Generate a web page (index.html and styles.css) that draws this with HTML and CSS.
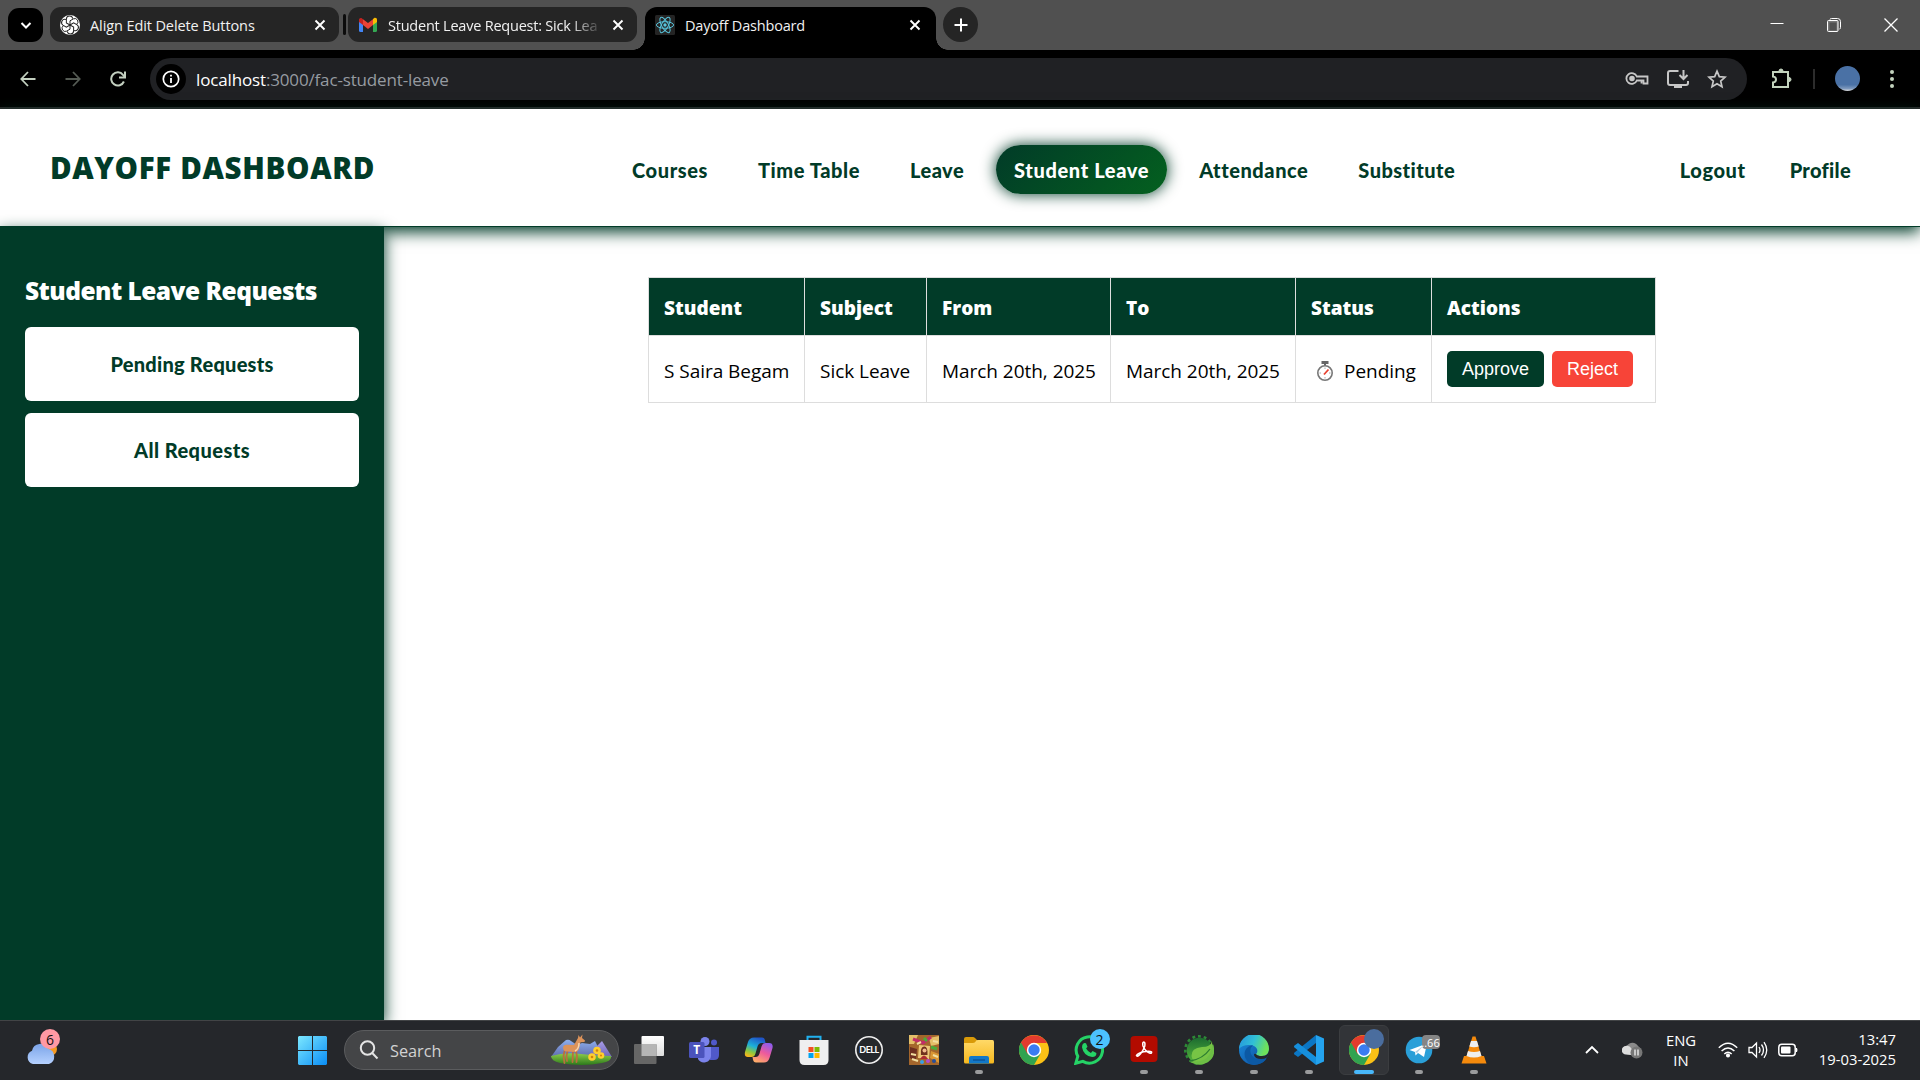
FILE: index.html
```html
<!DOCTYPE html>
<html lang="en">
<head>
<meta charset="utf-8">
<title>Dayoff Dashboard</title>
<link rel="stylesheet" href="styles.css">
</head>
<body>
<div class="tabstrip">
  <div class="tab-search"><svg width="14" height="14" viewBox="0 0 14 14" fill="none" stroke="#fff" stroke-width="2"><path d="M2.500 5l4.500 4.500L11.500 5"/></svg></div>
  <div class="tab tab-one">
    <svg class="fav" width="20" height="20" viewBox="0 0 20 20"><circle cx="10" cy="10" r="10" fill="#fff"/><g fill="none" stroke="#222" stroke-width="1"><path id="petal" d="M10 10V5.800l3.500-2a3.200 3.200 0 0 1 3.300 5.400"/><use href="#petal" transform="rotate(60 10 10)"/><use href="#petal" transform="rotate(120 10 10)"/><use href="#petal" transform="rotate(180 10 10)"/><use href="#petal" transform="rotate(240 10 10)"/><use href="#petal" transform="rotate(300 10 10)"/></g></svg>
    <span class="tab-title">Align Edit Delete Buttons</span>
    <svg class="x" width="12" height="12" viewBox="0 0 12 12" stroke="#fff" stroke-width="1.900"><path d="M1.500 1.500l9 9M10.500 1.500l-9 9"/></svg>
  </div>
  <div class="tab-divider"></div>
  <div class="tab tab-two">
    <svg class="fav" width="20" height="20" viewBox="0 0 20 20"><path d="M1 4.500v11A1.500 1.500 0 0 0 2.500 17H5V7z" fill="#4285f4"/><path d="M19 4.500v11a1.500 1.500 0 0 1-1.500 1.500H15V7z" fill="#34a853"/><path d="M15 4l1-.8c1.300-.9 3 0 3 1.500V7l-4 3z" fill="#fbbc04"/><path d="M5 4.200L4 3.400C2.700 2.500 1 3.300 1 4.900V7l4 3z" fill="#c5221f"/><path d="M5 4.200l5 3.900 5-3.900V10l-5 4-5-4z" fill="#ea4335"/></svg>
    <span class="tab-title fade">Student Leave Request: Sick Lea</span>
    <svg class="x" width="12" height="12" viewBox="0 0 12 12" stroke="#fff" stroke-width="1.900"><path d="M1.500 1.500l9 9M10.500 1.500l-9 9"/></svg>
  </div>
  <div class="tab tab-active">
    <svg class="fav" width="20" height="20" viewBox="0 0 20 20"><rect width="20" height="20" rx="1.500" fill="#242424"/><g fill="none" stroke="#58c4dc" stroke-width="1"><ellipse cx="10" cy="10" rx="8.600" ry="3.300"/><ellipse cx="10" cy="10" rx="8.600" ry="3.300" transform="rotate(60 10 10)"/><ellipse cx="10" cy="10" rx="8.600" ry="3.300" transform="rotate(120 10 10)"/></g><circle cx="10" cy="10" r="1.700" fill="#58c4dc"/></svg>
    <span class="tab-title">Dayoff Dashboard</span>
    <svg class="x" width="12" height="12" viewBox="0 0 12 12" stroke="#fff" stroke-width="1.900"><path d="M1.500 1.500l9 9M10.500 1.500l-9 9"/></svg>
  </div>
  <div class="new-tab"><svg width="14" height="14" viewBox="0 0 14 14" stroke="#fff" stroke-width="2"><path d="M7 .5v13M.5 7h13"/></svg></div>
  <div class="win-controls">
    <svg width="14" height="14" viewBox="0 0 14 14"><path d="M.5 5.500h13" stroke="#fff"/></svg>
    <svg width="14" height="14" viewBox="0 0 14 14" fill="none" stroke="#fff"><path d="M3 1.500q0-1 1.500-1h6q3 0 3 3v6q0 1.500-1 1.500"/><rect x=".5" y="2.500" width="10.500" height="11" rx="1" fill="#777"/><rect x="2.500" y="4.500" width="7" height="8" fill="#505050" stroke="none"/></svg>
    <svg width="14" height="14" viewBox="0 0 14 14" stroke="#fff" stroke-width="1.300"><path d="M.5.500l13 13M13.500.5l-13 13"/></svg>
  </div>
</div>

<div class="toolbar">
  <svg class="nav-ic" width="16" height="16" viewBox="0 0 16 16" fill="none" stroke="#c3d0c0" stroke-width="1.800"><path d="M15.500 8H1.500M8 1L1.300 8 8 15"/></svg>
  <svg class="nav-ic" width="16" height="16" viewBox="0 0 16 16" fill="none" stroke="#555b54" stroke-width="1.800"><path d="M.5 8h14M8 1l6.700 7L8 15"/></svg>
  <svg class="nav-ic" width="16" height="16" viewBox="0 0 16 16" fill="none" stroke="#c3d0c0" stroke-width="2"><path d="M13.900 10.500A6.600 6.600 0 1 1 13 3.800L14.500 5.500"/><path d="M15 .5v6H9"/></svg>
  <div class="omnibox">
    <div class="info"><svg width="18" height="18" viewBox="0 0 18 18"><circle cx="9" cy="9" r="7.700" fill="none" stroke="#fff" stroke-width="1.700"/><path d="M9 8v5M9 4.800v1.800" stroke="#fff" stroke-width="1.800"/></svg></div>
    <span class="url"><b>localhost</b>:3000/fac-student-leave</span>
    <div class="omni-icons">
      <svg width="24" height="16" viewBox="0 0 24 16" fill="none" stroke="#c7c7c7" stroke-width="2"><path d="M11.800 5.500H22.500v7h-4v-3h-2v3-3h-4.700A5.400 5.400 0 1 1 11.800 5.500z" stroke-width="1.800"/><circle cx="7" cy="7.500" r="1.800" fill="#c7c7c7"/></svg>
      <svg width="22" height="20" viewBox="0 0 22 20" fill="none" stroke="#c7c7c7" stroke-width="2"><path d="M11.500 2H3Q1 2 1 4v10q0 2 2 2h16q2 0 2-2v-2"/><path d="M16.500 1v8.500M12.500 6l4 4 4-4"/><path d="M7 17.500h8" stroke-width="3"/></svg>
      <svg width="20" height="20" viewBox="0 0 20 20" fill="none" stroke="#c7c7c7" stroke-width="1.700"><path d="M10 2.200l2.300 5.400 5.800.5-4.400 3.900 1.300 5.700-5-3-5 3 1.300-5.700L1.900 8.100l5.800-.5z"/></svg>
    </div>
  </div>
  <div class="tool-right">
    <svg width="22" height="22" viewBox="0 0 22 22" fill="none" stroke="#c3d3bd" stroke-width="2"><path d="M2 4h15v15H2v-4.500q3-.3 3-3t-3-3z"/><path d="M8 3q0-2 2-2t2 2zM18 9.500q2 0 2 2t-2 2z" fill="#c3d3bd" stroke-width="1"/></svg>
    <i class="sep"></i>
    <i class="avatar"></i>
    <svg width="6" height="20" viewBox="0 0 6 20" fill="#c3d3bd"><circle cx="3" cy="3" r="2"/><circle cx="3" cy="10" r="2"/><circle cx="3" cy="17" r="2"/></svg>
  </div>
</div>

<div class="page">
  <header class="site-header">
    <h1>DAYOFF DASHBOARD</h1>
    <nav class="main-nav">
      <a class="courses">Courses</a><a class="timetable">Time Table</a><a class="leave">Leave</a><a class="current">Student Leave</a><a class="attendance">Attendance</a><a class="substitute">Substitute</a>
    </nav>
    <nav class="user-nav"><a class="logout">Logout</a><a class="profile-link">Profile</a></nav>
  </header>
  <div class="content">
    <aside class="sidebar">
      <h2>Student Leave Requests</h2>
      <a class="side-btn pending">Pending Requests</a>
      <a class="side-btn all">All Requests</a>
    </aside>
    <main class="main">
      <table class="requests">
        <colgroup><col class="c1"><col class="c2"><col class="c3"><col class="c4"><col class="c5"><col class="c6"></colgroup>
        <thead><tr><th>Student</th><th>Subject</th><th>From</th><th>To</th><th>Status</th><th>Actions</th></tr></thead>
        <tbody><tr>
          <td>S Saira Begam</td><td>Sick Leave</td><td>March 20th, 2025</td><td>March 20th, 2025</td>
          <td><div class="status"><svg width="18" height="22" viewBox="0 0 18 22"><path d="M5.500 1h7v3h-7zM8 3h2v3H8z" fill="#666"/><circle cx="9" cy="13" r="7.200" fill="#fff" stroke="#777" stroke-width="1.600"/><path d="M9 7.500v1.500M9 17v1.500M3.500 13H5M13 13h1.500" stroke="#aaa"/><path d="M8 14.500L12.500 9.500" stroke="#e8412f" stroke-width="1.800"/></svg><span>Pending</span></div></td>
          <td class="action-cell"><div class="actions"><button class="approve">Approve</button><button class="reject">Reject</button></div></td>
        </tr></tbody>
      </table>
    </main>
  </div>
</div>

<footer class="taskbar">
  <div class="weather">
    <svg width="36" height="40" viewBox="0 0 36 40"><circle cx="26" cy="19" r="7" fill="#f59a23"/><defs><linearGradient id="cl" x2="0" y2="1"><stop stop-color="#7ba4e8"/><stop offset="1" stop-color="#b5d1ff"/></linearGradient></defs><path d="M9 34a7 7 0 0 1-1-13.300 8.500 8.500 0 0 1 16-2 8 8 0 0 1 1 15.300z" fill="url(#cl)"/></svg>
    <span class="badge pink">6</span>
  </div>
  <svg class="start" width="29" height="29" viewBox="0 0 29 29"><defs><linearGradient id="wl" x2="1" y2="1"><stop stop-color="#7ce8ff"/><stop offset="1" stop-color="#0a8df5"/></linearGradient></defs><path d="M1 0h13v14H0V1zM15 0h13l1 1v13H15zM0 15h14v14H1l-1-1zM15 15h14v13l-1 1H15z" fill="url(#wl)"/></svg>
  <div class="search">
    <svg width="20" height="20" viewBox="0 0 20 20" fill="none" stroke="#e4e4e4" stroke-width="2"><circle cx="8.500" cy="8" r="6.700"/><path d="M13.200 13l5.300 5.500"/></svg>
    <span>Search</span>
    <svg class="scene" width="62" height="32" viewBox="0 0 62 32"><defs><linearGradient id="gr" x2="0" y2="1"><stop stop-color="#8ccc4c"/><stop offset="1" stop-color="#2c7a1a"/></linearGradient><linearGradient id="mt" x2="0" y2="1"><stop stop-color="#8fb0ee"/><stop offset="1" stop-color="#5f6cae"/></linearGradient><linearGradient id="mp" x2="0" y2="1"><stop stop-color="#a89be8"/><stop offset="1" stop-color="#6d66b5"/></linearGradient></defs><path d="M1 23L8 13l8-7q3-1 5 1l6 4 5-2 8 1 5-3 8 16z" fill="url(#mt)"/><path d="M38 22l8-9 6-6 10 16z" fill="url(#mp)"/><path d="M1 22q14-4 30-2t30 2q1 5-9 7-20 4-42 0Q1 27 1 22z" fill="url(#gr)"/><g fill="none" stroke="#b9703e" stroke-width="1.800" stroke-linecap="round"><path d="M14.500 17l-1 5 1 7M17.500 17l-1 5 .500 5M23 17l-.5 11M26 17l1 5-.5 6"/></g><path d="M13 13q1-2.500 4-2.200l7 .2 4-7 .5-3 1.500 2.500L32.500.5 32 4l3 2.500-.5 1.500-4 .3-1.500 6.500q-1 3.200-4 3.200l-8-.5q-4 0-4-4.500z" fill="#dd935a"/><path d="M29 9q0 6-4 8" stroke="#f6d5ae" stroke-width="1.500" fill="none"/><g fill="#ffcf2e"><circle cx="47" cy="16.500" r="3.800"/><circle cx="42" cy="23" r="3.800"/><circle cx="51" cy="21.500" r="3.300"/></g><g fill="#d4820c"><circle cx="47" cy="16.500" r="1.300"/><circle cx="42" cy="23" r="1.300"/><circle cx="51" cy="21.500" r="1"/></g></svg>
  </div>
  <div class="apps">
    <div class="app"><svg width="30" height="30" viewBox="0 0 30 30"><defs><linearGradient id="tv" x2="0" y2="1"><stop stop-color="#fff"/><stop offset="1" stop-color="#ddd"/></linearGradient></defs><rect x="7.500" y="1" width="22.500" height="20" rx="1" fill="url(#tv)"/><rect x="0" y="9" width="22.500" height="20" rx="1" fill="#666"/><path d="M7.500 9h15v12h-15z" fill="#b5b5b5"/></svg></div>
    <div class="app"><svg width="30" height="30" viewBox="0 0 30 30"><circle cx="25" cy="7.500" r="3" fill="#5059c9"/><path d="M21 12h9v8q0 5-5 5h-4z" fill="#5059c9"/><circle cx="16" cy="6.500" r="4.500" fill="#7b83eb"/><path d="M9 12h13v9a7 7 0 0 1-13 3z" fill="#7b83eb"/><rect x="0" y="7" width="15.500" height="16" rx="1.500" fill="#4b53bc"/><text x="7.700" y="19.200" text-anchor="middle" class="teams-t">T</text></svg></div>
    <div class="app"><svg width="30" height="30" viewBox="0 0 30 30"><defs><linearGradient id="ca" x1=".6" y1="0" x2=".2" y2="1"><stop stop-color="#2055c8"/><stop offset=".45" stop-color="#1cb0d8"/><stop offset=".75" stop-color="#8fc83c"/><stop offset="1" stop-color="#ffb31a"/></linearGradient><linearGradient id="cb" x1=".8" y1="0" x2=".3" y2="1"><stop stop-color="#8c5cf0"/><stop offset=".5" stop-color="#ee5a9c"/><stop offset="1" stop-color="#ffab6a"/></linearGradient></defs><path d="M10 2.500h8q2.500 0 3 3l.5 2.500h-4q-3 0-4 3.500l-2 7q-1 3.500-4 3.500H4q-4 0-3-5l3-10q1.500-4.500 6-4.500z" fill="url(#ca)"/><path d="M20 27.500h-8q-2.500 0-3-3L8.500 22h3q3 0 4-3.500l2-7q1-3.500 4-3.500H25q4.500 0 3.500 5l-3 10q-1.500 4.500-5.500 4.500z" fill="url(#cb)"/></svg></div>
    <div class="app"><svg width="30" height="30" viewBox="0 0 30 30"><path d="M8.500 6V1.700h13V6" fill="none" stroke="#21b1ef" stroke-width="2"/><path d="M.5 5h29v20q0 5-5 5h-19q-5 0-5-5z" fill="#efefef"/><path d="M9.500 12h5v5h-5z" fill="#f25022"/><path d="M15.500 12h5v5h-5z" fill="#7fba00"/><path d="M9.500 18h5v5h-5z" fill="#00a4ef"/><path d="M15.500 18h5v5h-5z" fill="#ffb900"/></svg></div>
    <div class="app"><svg width="30" height="30" viewBox="0 0 30 30"><circle cx="15" cy="15" r="13.200" fill="none" stroke="#eee" stroke-width="1.600"/><text x="15" y="18.300" text-anchor="middle" class="dell-t">DELL</text></svg></div>
    <div class="app"><svg width="30" height="30" viewBox="0 0 30 30"><rect width="30" height="30" fill="#a4662c"/><path d="M0 0h9l-4 9H0zM20 3l10-2v8l-8 2z" fill="#e4bf69"/><path d="M4 4l10 4 8-6" stroke="#c22d68" stroke-width="3" fill="none"/><path d="M15 3l3 3M22 12l6 2" stroke="#4cab3a" stroke-width="3"/><path d="M1 12l7 2-1 12-6-3z" fill="#6e2e20"/><path d="M10 10l11 1-1 13-11-1z" fill="#edc678"/><path d="M12 20q-1-8 3-8.500t3.500 8.500z" fill="#71301d"/><circle cx="15.500" cy="15.500" r="2" fill="#f1b98d"/><path d="M11 24q4-7 8 0z" fill="#ae2931"/><path d="M22 16l8 3v9l-9-5z" fill="#d99634"/><path d="M2 19l5 1M3 24l6 2M24 20l5 2M8 9l4-2M24 6l5 1" stroke="#f2dea0" stroke-width="2"/><circle cx="13" cy="27" r="2" fill="#37a0e5"/><circle cx="19" cy="26" r="2" fill="#b34ad1"/><circle cx="25" cy="26" r="2" fill="#294f9a"/></svg></div>
    <div class="app"><svg width="30" height="30" viewBox="0 0 30 30"><defs><linearGradient id="fo" x2="0" y2="1"><stop stop-color="#ffd968"/><stop offset="1" stop-color="#f6b81e"/></linearGradient></defs><path d="M0 4q0-2 2-2h7q1 0 2 1l2 2v4H0z" fill="#d99a08"/><path d="M0 8h9q2 0 3-2 0-1 2-1h14.500Q30 5 30 7v20q0 1.500-1.500 1.500h-27Q0 28.500 0 27z" fill="url(#fo)"/><path d="M5 28.500V23q0-2 2-2h16q2 0 2 2v5.500z" fill="#1278c8"/><path d="M9 25h12" stroke="#0b4f92" stroke-width="1.300"/></svg><i class="run"></i></div>
    <div class="app"><svg width="30" height="30" viewBox="0 0 30 30"><g id="chrome"><circle cx="15" cy="15" r="15" fill="#fbc116"/><path d="M15 15L2 7.500A15 15 0 0 0 15 30l6.500-11.300z" fill="#31a350"/><path d="M15 15v-7h13A15 15 0 0 0 2 7.500l6.500 11.300z" fill="#e33b2e"/><circle cx="15" cy="15" r="7.200" fill="#fff"/><circle cx="15" cy="15" r="5.700" fill="#3a7cf0"/></g></svg></div>
    <div class="app"><svg width="30" height="30" viewBox="0 0 30 30"><path d="M1.800 28.300l2-7A13.200 13.200 0 1 1 8.800 26.400z" fill="none" stroke="#25d366" stroke-width="3"/><path d="M10 8l2 .2 1.500 3.600-1.400 1.800q1.800 3.200 4.800 4.500l1.700-2 3.800 1.800q.2 4-4.200 4.100Q9.500 20.800 8 12.200 7.800 9.500 10 8z" fill="#25d366"/></svg><span class="badge blue">2</span></div>
    <div class="app"><svg width="30" height="30" viewBox="0 0 30 30"><rect x="1.500" y="1" width="27" height="26" rx="4" fill="#b30b00"/><path d="M7.500 20.500q1.500-2.500 7-3.700 6-1.300 8 0 .8 2-2 1.200-4.500-2-6.500-7-.8-4 .8-4t1 4q-1.300 4-4 7.500-3.500 4-4.300 2z" fill="none" stroke="#fff" stroke-width="1.500"/></svg><i class="run"></i></div>
    <div class="app"><svg width="30" height="30" viewBox="0 0 30 30"><defs><linearGradient id="sp" x2="0" y2="1"><stop stop-color="#1c6b30"/><stop offset="1" stop-color="#57b83c"/></linearGradient></defs><circle cx="15" cy="15" r="13.700" fill="none" stroke="#2d8a36" stroke-width="2.600" stroke-dasharray="2.870 2.870"/><circle cx="15.500" cy="15.500" r="12.800" fill="url(#sp)"/><path d="M29 9q4 12-5 18T5 26q10 3 24-17z" fill="#6dbe45"/><path d="M28 6Q27 12 18 12 7 13 7.500 21q.5 4 3 5.500Q21 27 25 20t3-14z" fill="#77c445"/><path d="M6 26q13-2 20-12" stroke="#2b7d30" stroke-width="1.300" fill="none"/></svg><i class="run"></i></div>
    <div class="app"><svg width="30" height="30" viewBox="0 0 30 30"><defs><linearGradient id="ea" x2="1" y2=".3"><stop stop-color="#2493df"/><stop offset=".55" stop-color="#31c0d5"/><stop offset="1" stop-color="#6ee25b"/></linearGradient><linearGradient id="eb" x2="1" y2="1"><stop stop-color="#1b8fe0"/><stop offset="1" stop-color="#0c4797"/></linearGradient></defs><circle cx="15" cy="15" r="15" fill="url(#eb)"/><path d="M0 14A15 15 0 0 1 30 14q0 7-7 7-5 0-6-2 2-2 1-5-2-4-8-4Q3 10 0 14z" fill="url(#ea)"/><path d="M11 29Q4 23 6 16q2-5 8-6-4 4-2 9 3 7 12 5 2-.5 3 .5-6 7-16 4.500z" fill="#0c59a4"/><path d="M17 19q-2-1-2 1 1 4 7 4 3 0 6-1.500 3-4 2-7-1 5.500-7 5.500-5 0-6-2z" fill="#25272b"/></svg><i class="run"></i></div>
    <div class="app"><svg width="30" height="30" viewBox="0 0 30 30"><path d="M22 0l8 3.500v23L22 30z" fill="#24a3ee"/><path d="M22 0v8L4 22l-3.500-2.500q-1-1 0-2z" fill="#0b76c4"/><path d="M22 30v-8L4 8 .5 10.500q-1 1 0 2z" fill="#168fdc"/></svg><i class="run"></i></div>
    <div class="app active"><svg width="30" height="30" viewBox="0 0 30 30"><use href="#chrome"/></svg><span class="badge profile"></span><i class="run on"></i></div>
    <div class="app"><svg width="30" height="30" viewBox="0 0 30 30"><circle cx="15" cy="15" r="13.300" fill="#2a9fd8"/><path d="M5.500 15L23 8.500 20 22l-6-4-2.500 2.500L11 17z" fill="#fff"/><path d="M11 17l8-6-6 7z" fill="#b4cfe0"/></svg><span class="badge gray">..66</span><i class="run"></i></div>
    <div class="app"><svg width="30" height="30" viewBox="0 0 30 30"><path d="M5 21h20l2.500 7.500h-25z" fill="#f58a0c"/><path d="M13.500 1.500h3L23 23q-8 4.500-16 0z" fill="#f58a0c"/><path d="M12 6h6l1.700 5.500q-4.700 1.500-9.400 0zM9 16q6 2 12 0l1.500 5q-7.500 3-15 0z" fill="#eee"/></svg><i class="run"></i></div>
  </div>
  <div class="tray">
    <svg class="chev" width="14" height="10" viewBox="0 0 14 10" fill="none" stroke="#fff" stroke-width="1.800"><path d="M1 8l6-6 6 6"/></svg>
    <svg class="cloud" width="21" height="20" viewBox="0 0 21 20"><path d="M4 14a4.500 4.500 0 0 1 1-8.500A6.500 6.500 0 0 1 16 6q3 2 3 7l-8 2z" fill="#8b8b8b"/><path d="M4 14.500a4 4 0 0 1 0-8.500q3-1 6 3l3 2-4 4z" fill="#ddd"/><circle cx="14.500" cy="12.500" r="6" fill="#777"/><path d="M13 9.500v6M16 9.500v6" stroke="#fff" stroke-width="1.200"/></svg>
    <div class="lang"><span>ENG</span><span>IN</span></div>
    <svg class="wifi" width="20" height="16" viewBox="0 0 20 16" fill="none" stroke="#fff" stroke-width="1.500"><path d="M.8 5.800q9.200-9 18.400 0M3.600 9q6.400-6 12.800 0M6.300 12q3.700-3.300 7.400 0"/><circle cx="10" cy="13.500" r="1.300" fill="#fff"/></svg>
    <svg class="vol" width="20" height="18" viewBox="0 0 20 18" fill="none" stroke="#fff" stroke-width="1.300"><path d="M1 6.500h3L8.500 2v14L4 11.500H1zM11 6q2 3 0 6M13.500 3.500q4 5.500 0 11M16 1.200q5.500 8 0 15.600"/></svg>
    <svg class="bat" width="20" height="14" viewBox="0 0 20 14"><rect x=".8" y="1.300" width="16.400" height="11.400" rx="3" fill="none" stroke="#fff" stroke-width="1.500"/><rect x="3" y="3.500" width="9.500" height="7" rx="1" fill="#fff"/><path d="M18 5h1q1 2 0 4h-1z" fill="#fff"/></svg>
    <div class="clock"><span>13:47</span><span>19-03-2025</span></div>
  </div>
</footer>
</body>
</html>
```
FILE: styles.css
```css
* { box-sizing: border-box; }
body { margin: 0; width: 1920px; height: 1080px; overflow: hidden; display: flex; flex-direction: column; background: #fff; font-family: "Open Sans", "Noto Sans", sans-serif; color: #000; }
svg { display: block; flex: none; }

/* Browser tab strip */
.tabstrip { height: 50px; flex: none; display: flex; align-items: flex-start; padding: 7px 22px 0 8px; background: #505050; }
.tab-search { width: 35px; height: 34px; margin: 1px 7px 0 0; border-radius: 11px; background: #000; display: flex; align-items: center; justify-content: center; }
.tab { height: 35px; display: flex; align-items: center; background: #252525; border-radius: 11px; padding: 1px 13px 0 10px; color: #f1f1f1; font-size: 14.500px; letter-spacing: -.1px; }
.tab-one { width: 289px; }
.tab-two { width: 289px; margin-right: 8px; letter-spacing: -.22px; }
.tab-divider { width: 3px; height: 21px; margin: 7px 2px 0 4px; border-radius: 2px; background: #0c0c0c; }
.tab-active { position: relative; width: 291px; height: 43px; padding: 0 15px 7px 10px; background: #000; border-radius: 12px 12px 0 0; letter-spacing: -.18px; }
.tab-active::before, .tab-active::after { content: ""; position: absolute; bottom: 0; width: 12px; height: 12px; }
.tab-active::before { left: -12px; background: radial-gradient(circle at 0 0, transparent 11.500px, #000 12px); }
.tab-active::after { right: -12px; background: radial-gradient(circle at 100% 0, transparent 11.500px, #000 12px); }
.tab-title { margin-left: 10px; flex: 1; white-space: nowrap; line-height: 22px; padding-top: 1px; }
.fade { -webkit-mask-image: linear-gradient(90deg, #000 182px, rgba(0,0,0,.1) 212px); mask-image: linear-gradient(90deg, #000 182px, rgba(0,0,0,.1) 212px); }
.new-tab { width: 35px; height: 35px; margin-left: 7px; border-radius: 50%; background: #252525; display: flex; align-items: center; justify-content: center; }
.win-controls { margin-left: auto; display: flex; gap: 43px; padding-top: 11px; }

/* Browser toolbar */
.toolbar { height: 59px; flex: none; display: flex; align-items: center; background: #000; border-bottom: 2px solid #2b292b; padding: 0 25px 0 20px; }
.nav-ic { margin-right: 29px; }
.omnibox { width: 1597px; height: 42px; margin-left: -5px; border-radius: 21px; background: #202124; display: flex; align-items: center; padding: 0 20px 0 6px; }
.info { width: 30px; height: 30px; border-radius: 50%; background: #000; display: flex; align-items: center; justify-content: center; }
.url { margin-left: 10px; padding-top: 1px; font-size: 17px; letter-spacing: -.15px; color: #969ba1; }
.url b { font-weight: 400; color: #fff; }
.omni-icons { margin-left: auto; display: flex; align-items: center; gap: 18px; }
.tool-right { margin-left: auto; display: flex; align-items: center; }
.sep { width: 2px; height: 20px; margin: 0 20px; background: #2c2c2c; }
.avatar { width: 25px; height: 25px; border-radius: 50%; margin-right: 29px; background: linear-gradient(#4a71a5 75%, #7d98bd 90%, #ddd); }

/* Web page */
.page { flex: 1; display: flex; flex-direction: column; min-height: 0; }
.site-header { height: 118px; flex: none; display: flex; align-items: center; background: #fff; border-bottom: 1px solid #013b28; box-shadow: 0 5px 15px #013b28; padding: 4px 69px 0 50px; }
h1 { margin: 0 0 4px; width: 564px; font-size: 29.500px; letter-spacing: .650px; font-weight: 800; line-height: 36px; color: #013b28; white-space: nowrap; }
.main-nav { display: flex; gap: 14px; }
.user-nav { margin-left: auto; display: flex; gap: 44px; }
.main-nav a, .user-nav a, .side-btn { font: 900 20px/24px Lato, sans-serif; color: #013b28; white-space: nowrap; }
.main-nav a { padding: 13px 18px 12px; }
.main-nav .courses { letter-spacing: .6px; }
.main-nav .timetable { letter-spacing: .58px; }
.main-nav .leave { letter-spacing: .45px; }
.main-nav .attendance { letter-spacing: .55px; }
.main-nav .substitute { letter-spacing: .45px; }
.user-nav .logout { letter-spacing: .6px; }
.user-nav .profile-link { letter-spacing: .3px; }
.main-nav .current { letter-spacing: .63px; color: #fff; border-radius: 25px; background: linear-gradient(135deg, #013b28, #04601f); box-shadow: 0 0 15px #013b28; }
.content { flex: 1; display: flex; min-height: 0; }
.sidebar { position: relative; width: 384px; flex: none; background: #013b28; box-shadow: 0 5px 15px #013b28; padding: 47px 25px 0; display: flex; flex-direction: column; }
h2 { margin: 0 0 19px; font-size: 24.500px; letter-spacing: -.53px; font-weight: 800; line-height: 34px; color: #fff; white-space: nowrap; }
.side-btn { height: 74px; margin-bottom: 12px; border-radius: 6px; background: #fff; display: flex; align-items: center; justify-content: center; }
.pending { letter-spacing: .25px; }
.all { letter-spacing: .45px; }
.main { flex: 1; padding: 50px 264px 0; }
.requests { width: 1008px; table-layout: fixed; border-collapse: collapse; }
.c1 { width: 156px; } .c2 { width: 122px; } .c3 { width: 184px; } .c4 { width: 185px; } .c5 { width: 136px; } .c6 { width: 224px; }
th, td { border: 1px solid #ddd; padding: 0 0 0 15px; text-align: left; white-space: nowrap; }
th { height: 58px; background: #013b28; color: #fff; font-size: 19px; font-weight: 800; padding-top: 2px; }
td { height: 67px; font-size: 19px; padding-top: 3px; letter-spacing: -.04px; }
.action-cell { padding-top: 0; }
.status { display: flex; align-items: center; gap: 10px; padding-left: 5px; }
.actions { display: flex; gap: 8px; padding-bottom: 1px; }
button { height: 36px; border: 0; border-radius: 5px; color: #fff; font: 18px "Liberation Sans", sans-serif; padding: 1px 0 0; }
.approve { width: 97px; background: #013b28; }
.reject { width: 81px; background: #f74438; }

/* Desktop taskbar */
.taskbar { position: relative; height: 60px; flex: none; display: flex; align-items: center; background: #25272b; box-shadow: inset 0 1px #424446; }
.weather { position: relative; width: 298px; padding-left: 24px; }
.start { margin-right: 17px; }
.search { width: 275px; height: 40px; border-radius: 20px; background: #444547; border: 1px solid #5b5c5e; display: flex; align-items: center; padding: 0 6px 0 14px; font-size: 16.300px; color: #d2d2d2; }
.search span { margin-left: 11px; padding-top: 1px; }
.scene { margin-left: auto; }
.apps { display: flex; margin-left: 2.500px; }
.app { position: relative; width: 55px; height: 50px; display: flex; align-items: center; justify-content: center; }
.app.active { width: 50px; margin: 0 2.500px; border-radius: 6px; background: #323438; border: 1px solid #3b3d40; }
.run { position: absolute; bottom: 1px; left: 23.500px; width: 8px; height: 4px; border-radius: 2px; background: #9a9b9d; }
.run.on { left: 14px; width: 20px; background: #48b8fb; bottom: 0; }
.badge { position: absolute; display: flex; align-items: center; justify-content: center; border-radius: 50%; color: #111; }
.pink { left: 40px; top: -1px; width: 20px; height: 20px; background: #ff99a4; font-size: 14px; }
.blue { left: 28px; top: 4px; width: 20px; height: 20px; background: #4cc2ff; font-size: 14px; }
.profile { left: 24px; top: 3px; width: 20px; height: 20px; background: #4a6d9e; }
.gray { left: 30px; top: 10px; width: 18px; height: 14px; border-radius: 4px; background: #858585; color: #fff; font-size: 11px; }
.teams-t { font: bold 12px "Open Sans", sans-serif; fill: #fff; }
.dell-t { font: bold 9px Lato, sans-serif; fill: #fff; letter-spacing: -.5px; }
.tray { margin-left: auto; display: flex; align-items: center; padding-right: 24px; color: #fff; font-size: 14.800px; line-height: 20px; }
.chev { margin-right: 23px; }
.cloud { margin-right: 23px; }
.lang { width: 30px; margin-right: 22px; display: flex; flex-direction: column; align-items: center; }
.wifi, .vol { margin-right: 10px; }
.clock { width: 98px; display: flex; flex-direction: column; align-items: flex-end; padding-bottom: 2px; }
```
